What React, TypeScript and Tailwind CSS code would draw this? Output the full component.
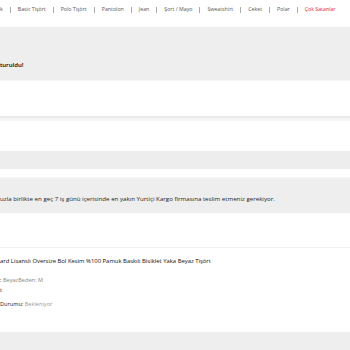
import React from 'react';

const navItems = ['k', 'Basic Tişört', 'Polo Tişört', 'Pantolon', 'Jean', 'Şort / Mayo', 'Sweatshirt', 'Ceket', 'Polar'];

const App: React.FC = () => {
  return (
    <div className="w-[350px] h-[350px] overflow-hidden bg-white text-[#222] font-['Open_Sans',Arial,sans-serif]">
      {/* Kategori menüsü */}
      <nav className="h-[20px] flex items-center gap-[7px] text-[5.25px] text-[#555] whitespace-nowrap">
        {navItems.map((item) => (
          <React.Fragment key={item}>
            <span>{item}</span>
            <span className="w-px h-[6px] bg-[#aaa]" />
          </React.Fragment>
        ))}
        <span className="text-[#e3202a]">Çok Satanlar</span>
      </nav>

      {/* Sipariş başlığı */}
      <section className="mt-[7px] h-[53px] bg-[#eeeeee] flex flex-col justify-end pb-[10px]">
        <p className="-ml-[3px] text-[6px] font-semibold text-black whitespace-nowrap">şturuldu!</p>
      </section>

      <div className="h-px bg-[#f4f4f4]" />
      <div className="h-[35px]" />
      <div className="h-[2px] bg-[#e9e9e9]" />
      <div className="h-[3px] bg-[#f5f5f5]" />
      <div className="h-[30px]" />

      <div className="h-[18px] bg-[#ededed]" />
      <div className="h-[8px]" />
      <div className="h-[2px] bg-[#f4f4f4]" />

      {/* İade bilgisi */}
      <section className="h-[34px] bg-[#eeeeee] flex items-center pt-[6px]">
        <p className="text-[6.15px] font-medium text-[#222] whitespace-nowrap">
          uzla birlikte en geç 7 iş günü içerisinde en yakın Yurtiçi Kargo firmasına teslim etmeniz gerekiyor.
        </p>
      </section>

      <div className="h-[34px]" />
      <div className="h-px bg-[#f2f2f2]" />

      {/* Ürün */}
      <section className="h-[84px] pt-[9px] flex flex-col text-[5.6px] whitespace-nowrap">
        <p className="text-[5.9px] font-medium text-[#111]">
          ard Lisanslı Oversize Bol Kesim %100 Pamuk Baskılı Bisiklet Yaka Beyaz Tişört
        </p>
        <p className="mt-[10px] text-[#888]">
          <span className="text-[#222]">: </span>BeyazBeden: M
        </p>
        <p className="mt-[2px] text-[#222]">t</p>
        <p className="mt-[5px]">
          <span className="font-medium text-[#222]">Durumu: </span>
          <span className="text-[#999]">Bekleniyor</span>
        </p>
      </section>

      <div className="h-[20px] bg-[#eeeeee]" />
    </div>
  );
};

export default App;
